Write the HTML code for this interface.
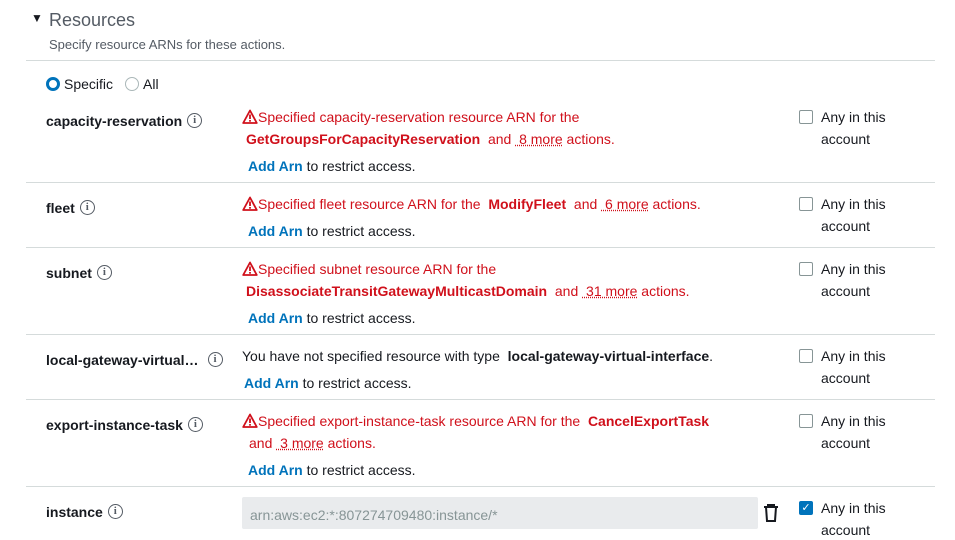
<html><head><style>
body{margin:0;width:955px;height:540px;background:#fff;font-family:"Liberation Sans",sans-serif;font-size:14px;color:#16191f;position:relative;overflow:hidden}
.a{position:absolute;white-space:nowrap;line-height:16px}
.b{font-weight:bold}
.r{color:#d0101b}
.l{color:#0073bb;font-weight:bold}
.u{text-decoration:underline dotted}
.hr{position:absolute;left:26px;width:909px;height:1px;background:#d5dbdb}
.i{display:inline-block;width:13px;height:13px;border:1.6px solid #545b64;border-radius:50%;font-size:11px;line-height:13px;text-align:center;font-weight:bold;color:#545b64;vertical-align:top;margin-left:5px;font-family:"Liberation Serif",serif}
.cb{position:absolute;width:12px;height:12px;border:1px solid #879596;border-radius:2px;left:799px}
.w{display:inline-block;width:16px;height:15px;vertical-align:-2px}
</style></head><body>
<svg width="0" height="0" style="position:absolute"><defs><symbol id="t" viewBox="0 0 16 15"><path d="M8 1.5L1.2 14h13.6z" fill="none" stroke="#d0101b" stroke-width="1.8" stroke-linejoin="round"/><rect x="7.1" y="5.5" width="1.8" height="4.5" fill="#d0101b"/><rect x="7.1" y="11" width="1.8" height="1.7" fill="#d0101b"/></symbol></defs></svg>
<div class="a" style="left:31px;top:10px;font-size:12px">▼</div>
<div class="a" style="left:49px;top:9px;font-size:18px;line-height:22px;color:#545b64">Resources</div>
<div class="a" style="left:49px;top:37px;font-size:13px;color:#545b64">Specify resource ARNs for these actions.</div>
<div class="hr" style="top:60px"></div>
<div style="position:absolute;left:46px;top:77px;width:8px;height:8px;border:3px solid #0073bb;border-radius:50%"></div>
<div class="a" style="left:64px;top:76px">Specific</div>
<div style="position:absolute;left:125px;top:77px;width:12px;height:12px;border:1px solid #aab7b8;border-radius:50%"></div>
<div class="a" style="left:143px;top:76px">All</div>

<div class="a b" style="left:46px;top:113px">capacity-reservation<span class="i">i</span></div>
<div class="a r" style="left:242px;top:109px"><svg class="w"><use href="#t"/></svg>Specified capacity-reservation resource ARN for the</div>
<div class="a r" style="left:246px;top:131px"><b>GetGroupsForCapacityReservation</b>&nbsp; and <span class="u">&nbsp;8 more</span> actions.</div>
<div class="a" style="left:248px;top:158px"><span class="l">Add Arn</span> to restrict access.</div>
<div class="cb" style="top:110px"></div><div class="a" style="left:821px;top:109px">Any in this</div><div class="a" style="left:821px;top:131px">account</div>
<div class="hr" style="top:182px"></div>

<div class="a b" style="left:46px;top:200px">fleet<span class="i">i</span></div>
<div class="a r" style="left:242px;top:196px"><svg class="w"><use href="#t"/></svg>Specified fleet resource ARN for the&nbsp; <b>ModifyFleet</b>&nbsp; and <span class="u">&nbsp;6 more</span> actions.</div>
<div class="a" style="left:248px;top:223px"><span class="l">Add Arn</span> to restrict access.</div>
<div class="cb" style="top:197px"></div><div class="a" style="left:821px;top:196px">Any in this</div><div class="a" style="left:821px;top:218px">account</div>
<div class="hr" style="top:247px"></div>

<div class="a b" style="left:46px;top:265px">subnet<span class="i">i</span></div>
<div class="a r" style="left:242px;top:261px"><svg class="w"><use href="#t"/></svg>Specified subnet resource ARN for the</div>
<div class="a r" style="left:246px;top:283px"><b>DisassociateTransitGatewayMulticastDomain</b>&nbsp; and <span class="u">&nbsp;31 more</span> actions.</div>
<div class="a" style="left:248px;top:310px"><span class="l">Add Arn</span> to restrict access.</div>
<div class="cb" style="top:262px"></div><div class="a" style="left:821px;top:261px">Any in this</div><div class="a" style="left:821px;top:283px">account</div>
<div class="hr" style="top:334px"></div>

<div class="a b" style="left:46px;top:352px">local-gateway-virtual…<span class="i" style="margin-left:9px">i</span></div>
<div class="a" style="left:242px;top:348px">You have not specified resource with type&nbsp; <b>local-gateway-virtual-interface</b>.</div>
<div class="a" style="left:244px;top:375px"><span class="l">Add Arn</span> to restrict access.</div>
<div class="cb" style="top:349px"></div><div class="a" style="left:821px;top:348px">Any in this</div><div class="a" style="left:821px;top:370px">account</div>
<div class="hr" style="top:399px"></div>

<div class="a b" style="left:46px;top:417px">export-instance-task<span class="i">i</span></div>
<div class="a r" style="left:242px;top:413px"><svg class="w"><use href="#t"/></svg>Specified export-instance-task resource ARN for the&nbsp; <b>CancelExportTask</b></div>
<div class="a r" style="left:249px;top:435px">and <span class="u">&nbsp;3 more</span> actions.</div>
<div class="a" style="left:248px;top:462px"><span class="l">Add Arn</span> to restrict access.</div>
<div class="cb" style="top:414px"></div><div class="a" style="left:821px;top:413px">Any in this</div><div class="a" style="left:821px;top:435px">account</div>
<div class="hr" style="top:486px"></div>

<div class="a b" style="left:46px;top:504px">instance<span class="i">i</span></div>
<div style="position:absolute;left:242px;top:497px;width:516px;height:32px;background:#e9ebed;border-radius:2px"></div>
<div class="a" style="left:250px;top:507px;color:#879596">arn:aws:ec2:*:807274709480:instance/*</div>
<svg style="position:absolute;left:763px;top:504px" width="16" height="18" viewBox="0 0 16 18"><path d="M1 3h14M5 3V1h6v2M3 3l1 14h8l1-14" fill="none" stroke="#16191f" stroke-width="2"/></svg>
<div style="position:absolute;left:799px;top:501px;width:14px;height:14px;background:#0073bb;border-radius:2px;color:#fff;font-size:11px;line-height:14px;text-align:center">✓</div>
<div class="a" style="left:821px;top:500px">Any in this</div><div class="a" style="left:821px;top:522px">account</div>
</body></html>
